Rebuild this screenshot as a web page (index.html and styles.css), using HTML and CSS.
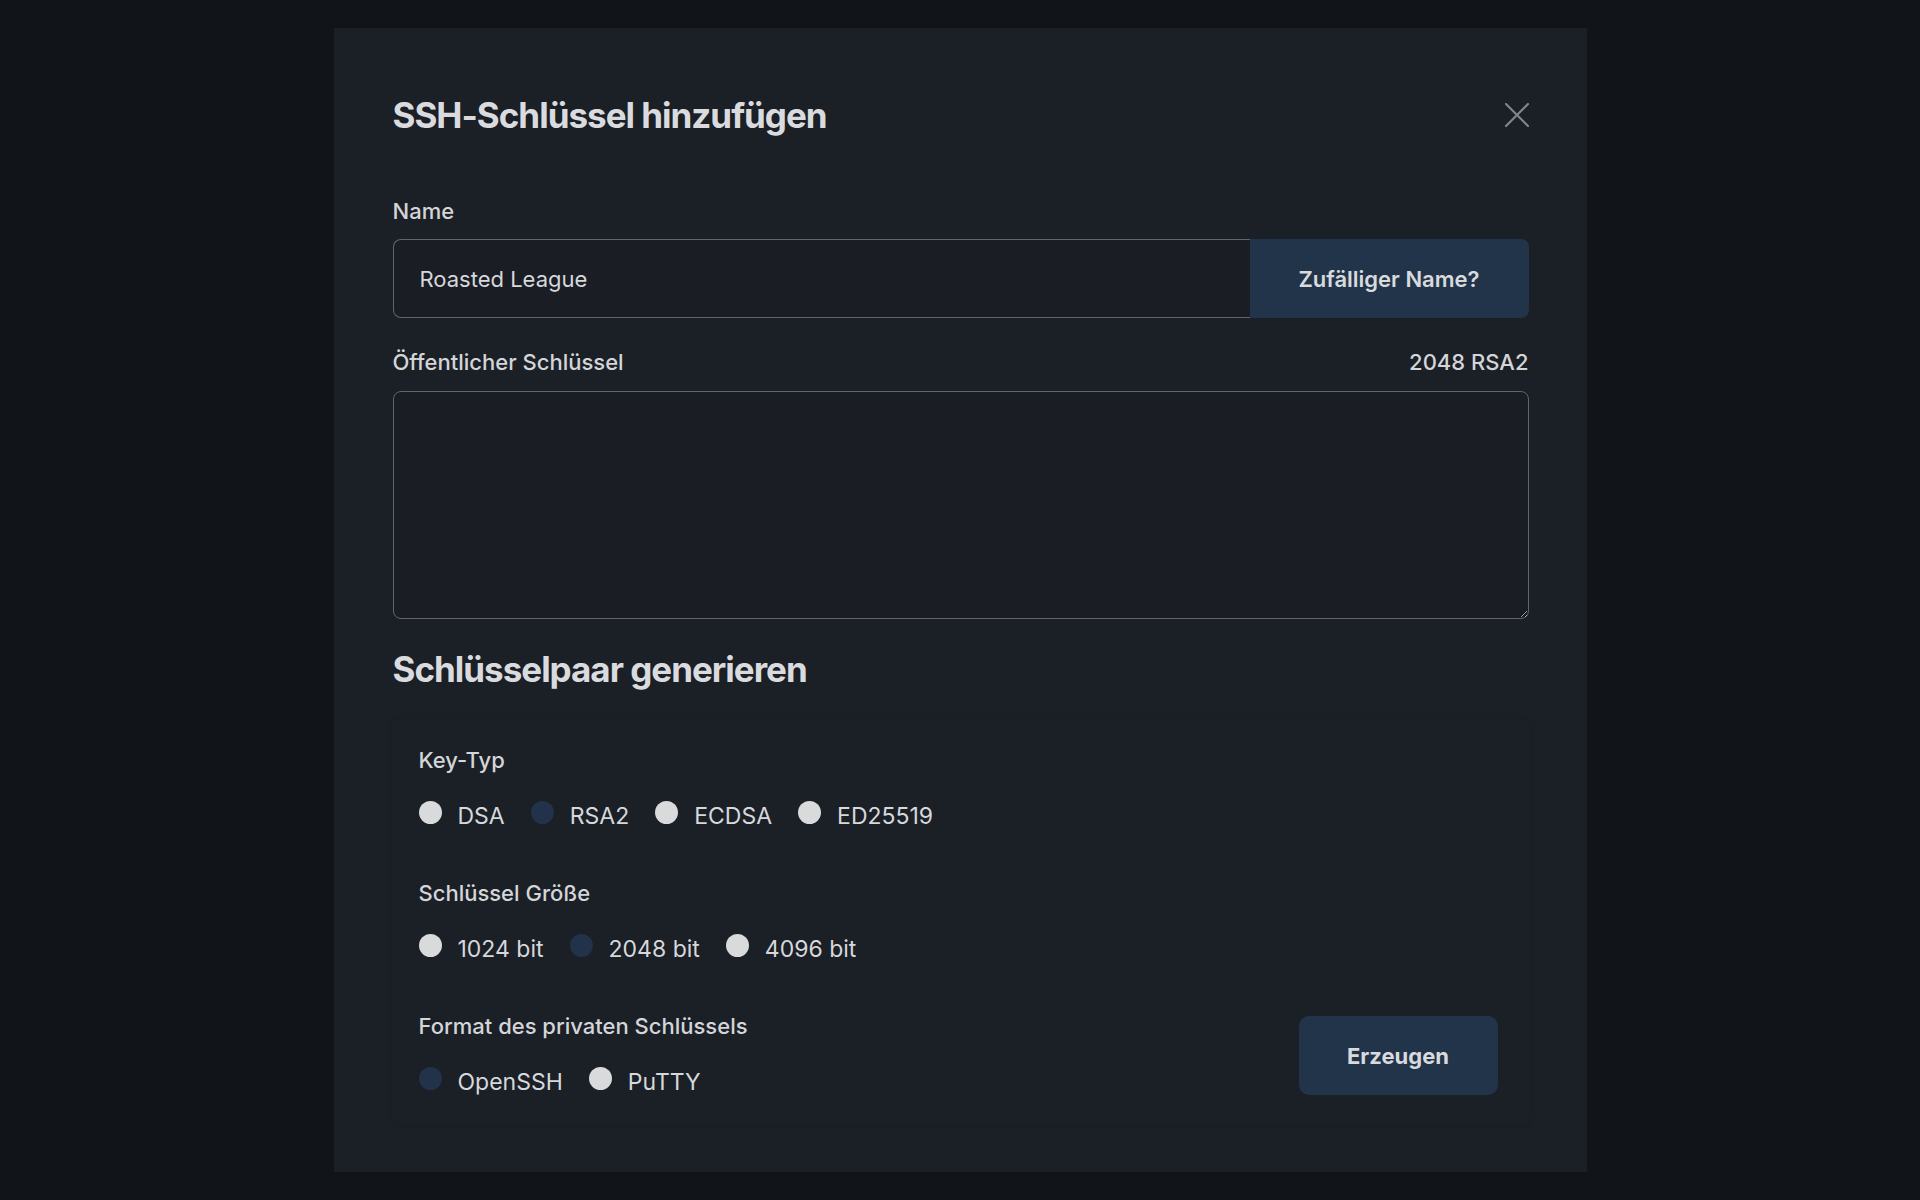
FILE: index.html
```html
<!DOCTYPE html>
<html lang="de">
  <head>
    <meta charset="utf-8" />
    <title>SSH-Schlüssel hinzufügen</title>
    <link rel="stylesheet" href="styles.css">
  </head>
  <body>
    <div class="modal">
      <div class="modal-header">
        <h2>SSH-Schlüssel hinzufügen</h2>
        <button class="close-btn" aria-label="Schließen">
          <svg width="24" height="24" viewBox="0 0 24 24">
            <path d="M1 1 L23 23 M23 1 L1 23" stroke="#80858d" stroke-width="2.2" stroke-linecap="round" fill="none" />
          </svg>
        </button>
      </div>

      <div class="form-group">
        <label for="nameInput">Name</label>
        <div class="input-group">
          <input type="text" id="nameInput" value="Roasted League" />
          <button class="btn-random">Zufälliger Name?</button>
        </div>
      </div>

      <div class="form-group">
        <div class="label-row">
          <label for="publicKey">Öffentlicher Schlüssel</label>
          <span class="key-info">2048 RSA2</span>
        </div>
        <textarea id="publicKey"></textarea>
      </div>

      <h3>Schlüsselpaar generieren</h3>

      <div class="generate-card">
        <div class="option-group">
          <div class="option-label">Key-Typ</div>
          <div class="radio-row">
            <label><input type="radio" name="keyType" value="dsa" /> DSA</label>
            <label><input type="radio" name="keyType" value="rsa" checked /> RSA2</label>
            <label><input type="radio" name="keyType" value="ecdsa" /> ECDSA</label>
            <label><input type="radio" name="keyType" value="ed25519" /> ED25519</label>
          </div>
        </div>

        <div class="option-group">
          <div class="option-label">Schlüssel Größe</div>
          <div class="radio-row">
            <label><input type="radio" name="keySize" value="1024" /> 1024 bit</label>
            <label><input type="radio" name="keySize" value="2048" checked /> 2048 bit</label>
            <label><input type="radio" name="keySize" value="4096" /> 4096 bit</label>
          </div>
        </div>

        <div class="last-row">
          <div class="option-group">
            <div class="option-label">Format des privaten Schlüssels</div>
            <div class="radio-row">
              <label><input type="radio" name="format" value="openssh" checked /> OpenSSH</label>
              <label><input type="radio" name="format" value="putty" /> PuTTY</label>
            </div>
          </div>
          <button class="btn-generate">Erzeugen</button>
        </div>
      </div>
    </div>
  </body>
</html>
```

FILE: styles.css
```css
* {
  box-sizing: border-box;
  margin: 0;
  padding: 0;
}

html {
  color-scheme: dark;
}

body {
  font-family: "Inter", "Noto Sans", sans-serif;
  background: #111418;
  color: #d6d8db;
  display: flex;
  justify-content: center;
  align-items: center;
  height: 100vh;
}

.modal {
  width: 1253px;
  background: #1b1f26;
  padding: 66px 58px 48px 59px;
}

.modal-header {
  display: flex;
  justify-content: space-between;
  align-items: center;
  height: 42px;
  margin-bottom: 61px;
}

h2,
h3 {
  font-size: 35px;
  line-height: 42px;
  font-weight: 700;
  letter-spacing: -1px;
  color: #dadbde;
}

.close-btn {
  background: none;
  border: none;
  width: 24px;
  height: 24px;
  cursor: pointer;
  display: flex;
}

.form-group {
  margin-bottom: 30px;
}

.form-group label,
.option-label,
.key-info {
  display: block;
  font-size: 22px;
  line-height: 28px;
  font-weight: 500;
  color: #d3d5d9;
}

.form-group label {
  margin-bottom: 14px;
}

.label-row {
  display: flex;
  justify-content: space-between;
}

.label-row label {
  margin-bottom: 15px;
}

.input-group {
  display: flex;
  height: 79px;
}

.input-group input {
  flex: 1;
  background: #1a1d24;
  border: 1px solid #60646c;
  border-right: none;
  border-radius: 8px 0 0 8px;
  padding: 0 26px;
  font-family: inherit;
  font-size: 22px;
  color: #d6d8db;
  outline: none;
}

.btn-random {
  width: 279px;
  background: #22344a;
  border: none;
  border-radius: 0 8px 8px 0;
  font-family: inherit;
  font-size: 22px;
  font-weight: 600;
  color: #d8dadd;
  cursor: pointer;
}

textarea {
  display: block;
  width: 100%;
  height: 228px;
  background: #1a1d24;
  border: 1px solid #60646c;
  border-radius: 8px;
  resize: vertical;
  font-family: inherit;
  font-size: 20px;
  color: #d6d8db;
  padding: 16px 26px;
  outline: none;
}

h3 {
  margin-top: -1.5px;
  margin-bottom: 30px;
}

.generate-card {
  padding: 26px 31px 26px 26px;
  box-shadow: 0 0 8px rgba(0, 0, 0, 0.05);
  border-radius: 6px;
}

.option-group {
  margin-bottom: 47px;
}

.option-label {
  margin-bottom: 26px;
}

.radio-row {
  display: flex;
  gap: 26px;
  height: 32px;
}

.radio-row label {
  display: flex;
  align-items: center;
  gap: 16px;
  font-size: 23px;
  line-height: 32px;
  color: #d6d8db;
  cursor: pointer;
}

.radio-row input {
  appearance: none;
  width: 23px;
  height: 23px;
  border-radius: 50%;
  background: #d9dadc;
  margin-bottom: 7px;
  cursor: pointer;
}

.radio-row input:checked {
  background: #21324a;
}

.last-row {
  display: flex;
  justify-content: space-between;
  align-items: center;
}

.last-row .option-group {
  margin-bottom: 0;
}

.btn-generate {
  width: 199px;
  height: 79px;
  margin-top: 2px;
  background: #22344a;
  border: none;
  border-radius: 10px;
  font-family: inherit;
  font-size: 22px;
  font-weight: 700;
  color: #d8dadd;
  cursor: pointer;
}
```
